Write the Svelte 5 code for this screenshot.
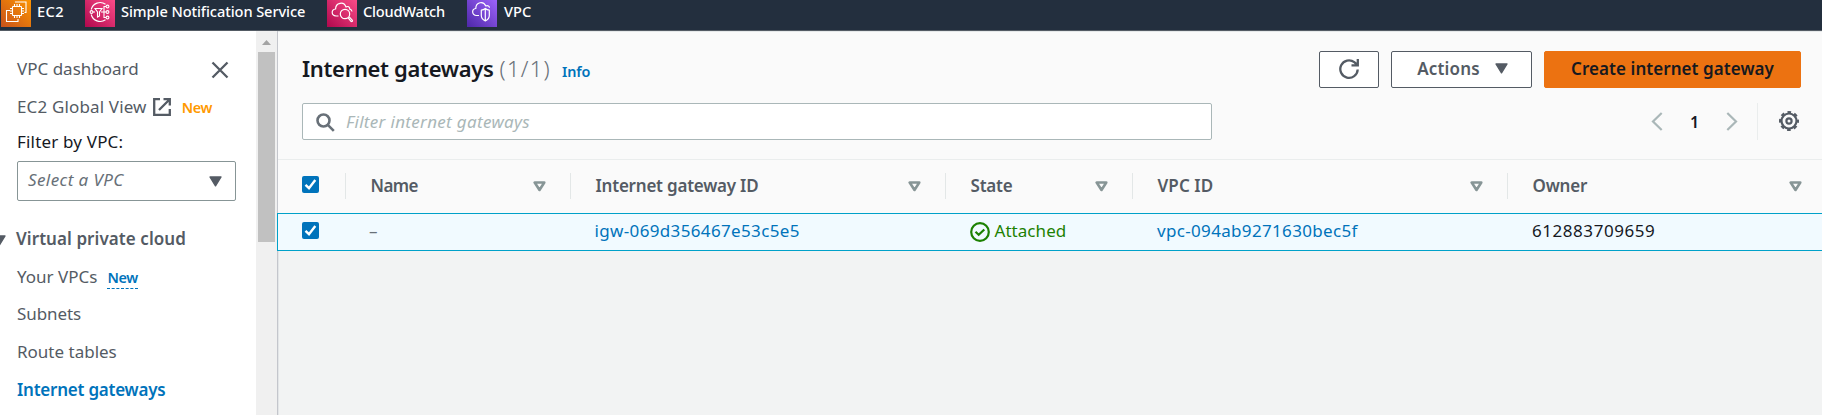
<script>
  const columns = [
    { label: 'Name', ls: -0.55 },
    { label: 'Internet gateway ID', ls: -0.22 },
    { label: 'State', ls: -0.2 },
    { label: 'VPC ID', ls: 0.1 },
    { label: 'Owner', ls: -0.2 },
  ];
</script>

{#snippet check()}
  <span class="check"><svg width="17" height="17" viewBox="0 0 17 17"><path d="M3.5 8.8 7 12.2 13.3 4" fill="none" stroke="#fff" stroke-width="2.4" /></svg></span>
{/snippet}

{#snippet caret()}
  <svg class="caret" width="13" height="11" viewBox="0 0 13 11"><path d="M1 1H12L6.5 9.8Z" fill="#545b64" stroke="#545b64" stroke-width="1.4" stroke-linejoin="round" /></svg>
{/snippet}

<div class="page">
  <header>
    <div class="service ec2">
      <svg width="30" height="30" viewBox="0 0 30 30">
        <defs><linearGradient id="o" x1="0" y1="1" x2="1" y2="0"><stop stop-color="#c8511b" /><stop offset="1" stop-color="#f90" /></linearGradient></defs>
        <rect width="30" height="30" fill="url(#o)" />
        <g fill="none" stroke="#fff" stroke-width="1.1">
          <rect x="11.5" y="9.5" width="9" height="9" rx=".6" />
          <path d="M13.5 7v2.5M16 7v2.5M18.5 7v2.5M13.5 18.5V21M16 18.5V21M18.5 18.5V21M9 11.5h2.5M9 14h2.5M9 16.5h2.5M20.5 11.5H23M20.5 14H23M20.5 16.5H23" />
          <path d="M14.5 5.5V5h10.500v10.500h-1.500M9 13.500H5.500v11H17v-2.500" />
        </g>
      </svg>
      <span>EC2</span>
    </div>
    <div class="service sns">
      <svg width="30" height="30" viewBox="0 0 30 30">
        <defs><linearGradient id="p" x1="0" y1="1" x2="1" y2="0"><stop stop-color="#b0084d" /><stop offset="1" stop-color="#ff4f8b" /></linearGradient></defs>
        <rect width="30" height="30" fill="url(#p)" />
        <g fill="none" stroke="#fff" stroke-width="1.1">
          <path d="M20.500 7.200A9.300 9.300 0 0 0 6.200 12.500M6.200 17.500A9.300 9.300 0 0 0 20.500 22.800" />
          <circle cx="6.500" cy="15" r="1.400" />
          <path d="M8 15h2M10 11.500h7l-2.500 3.500v4l-2 1v-5ZM16 15h5M21 9.500h-2v11h2" />
          <circle cx="22.500" cy="9.500" r="1.400" /><circle cx="22.500" cy="15" r="1.400" /><circle cx="22.500" cy="20.500" r="1.400" />
        </g>
      </svg>
      <span>Simple Notification Service</span>
    </div>
    <div class="service cw">
      <svg width="30" height="30" viewBox="0 0 30 30">
        <rect width="30" height="30" fill="url(#p)" />
        <g fill="none" stroke="#fff" stroke-width="1.2" stroke-linejoin="round">
          <path d="M11.500 19H9C4 18.500 4 12.500 8.600 12 8.500 5.500 17 4 19 10c2-1.200 3.800 0 3.800 2.200 1.200.2 2 1 2.200 2.300" />
          <circle cx="18" cy="17" r="4.700" />
          <path d="m21.200 20.800 2.800 3.500c1 .8 2-.3 1.200-1.200l-3-3.300" />
        </g>
      </svg>
      <span>CloudWatch</span>
    </div>
    <div class="service vpc">
      <svg width="30" height="30" viewBox="0 0 30 30">
        <defs><linearGradient id="v" x1="0" y1="1" x2="1" y2="0"><stop stop-color="#4d27a8" /><stop offset="1" stop-color="#a166ff" /></linearGradient></defs>
        <rect width="30" height="30" fill="url(#v)" />
        <g fill="none" stroke="#fff" stroke-width="1.200" stroke-linejoin="round">
          <path d="M12 18.500H9.500C4.500 18 4.500 12 8.800 11.500 8.800 5 16.500 3.500 18.800 9c2-1 3.700.2 3.700 1.800" />
          <path d="M18.300 11.500c1.300 1.200 2.600 1.600 4 1.700v5.300c0 2.600-1.600 4.300-4 5.400-2.400-1.100-4-2.800-4-5.400v-5.300c1.400-.1 2.700-.5 4-1.700ZM18.300 12v11.500" />
        </g>
      </svg>
      <span>VPC</span>
    </div>
  </header>

  <div class="body">
    <nav>
      <div class="row first">
        <span>VPC dashboard</span>
        <svg width="18" height="18" viewBox="0 0 18 18"><path d="M1.500 1.500 16.500 16.500M16.500 1.500 1.500 16.500" stroke="#545b64" stroke-width="2.300" fill="none" /></svg>
      </div>
      <div class="row global">
        <span>EC2 Global View</span>
        <svg width="18" height="18" viewBox="0 0 18 18"><path d="M7 1.200H1.200V16.800H16.800V11M10.500 1.200H16.800V7.500M16.500 1.500 6 12" stroke="#545b64" stroke-width="2.300" fill="none" /></svg>
        <span class="new">New</span>
      </div>
      <div class="row filter"><span>Filter by VPC:</span></div>
      <div class="select"><i>Select a VPC</i>{@render caret()}</div>
      <div class="row heading">{@render caret()}<b>Virtual private cloud</b></div>
      <div class="row item"><span>Your VPCs</span><span class="new link">New</span></div>
      <div class="row item"><span class="subnets">Subnets</span></div>
      <div class="row item"><span>Route tables</span></div>
      <div class="row item"><b class="active">Internet gateways</b></div>
    </nav>
    <div class="scroll">
      <svg width="9" height="5" viewBox="0 0 9 5"><path d="M0 5 4.500 0 9 5Z" fill="#a3a3a3" /></svg>
      <div class="thumb"></div>
    </div>

    <main>
      <section class="tools">
        <div class="titlebar">
          <h1>Internet gateways</h1><span class="count">(1/1)</span><a class="info">Info</a>
          <div class="buttons">
            <div class="btn refresh">
              <svg width="20" height="20" viewBox="0 0 20 20"><path d="M18.700 10.500A8.700 8.700 0 1 1 15.300 3.200L18.500 6.200M18.800 0V6.300H12.500" fill="none" stroke="#545b64" stroke-width="2.300" /></svg>
            </div>
            <div class="btn actions"><span>Actions</span>{@render caret()}</div>
            <div class="btn create">Create internet gateway</div>
          </div>
        </div>
        <div class="searchbar">
          <div class="search">
            <svg width="19" height="19" viewBox="0 0 19 19"><g fill="none" stroke="#687078" stroke-width="2.600"><circle cx="7.500" cy="7.500" r="6" /><path d="m11.800 11.800 6 6" /></g></svg>
            <i>Filter internet gateways</i>
          </div>
          <div class="pager">
            <svg width="12" height="19" viewBox="0 0 12 19"><path d="M10.700 1 2 9.500 10.700 18" fill="none" stroke="#aab7b8" stroke-width="2.200" /></svg>
            <b>1</b>
            <svg width="12" height="19" viewBox="0 0 12 19"><path d="M1.300 1 10 9.500 1.300 18" fill="none" stroke="#aab7b8" stroke-width="2.200" /></svg>
            <div class="gear">
              <svg width="20" height="20" viewBox="-10 -10 20 20" fill="none" stroke="#545b64">
                <circle r="7.500" stroke-width="2.200" />
                <circle r="9" stroke-width="2" stroke-dasharray="3.700 3.369" stroke-dashoffset="1.850" />
                <circle r="2.600" stroke-width="2.200" />
              </svg>
            </div>
          </div>
        </div>
      </section>
      <section class="grid head">
        <div class="cell pick">{@render check()}</div>
        {#each columns as c}
          <div class="cell">
            <b style:letter-spacing="{c.ls}px">{c.label}</b>
            <svg width="13" height="11" viewBox="0 0 13 11"><path d="M1.700 1.500H11.300L6.500 9Z" fill="none" stroke="#879596" stroke-width="2.600" stroke-linejoin="round" /></svg>
          </div>
        {/each}
      </section>
      <section class="grid data">
        <div class="cell pick">{@render check()}</div>
        <div class="cell dash">–</div>
        <div class="cell"><a class="igw">igw-069d356467e53c5e5</a></div>
        <div class="cell state">
          <svg width="20" height="20" viewBox="0 0 20 20" fill="none" stroke="#1d8102" stroke-width="2.200"><circle cx="10" cy="10" r="8.800" /><path d="m5.500 9.800 3.200 3 5.600-5.300" /></svg>
          <span>Attached</span>
        </div>
        <div class="cell"><a class="vpcid">vpc-094ab9271630bec5f</a></div>
        <div class="cell owner">612883709659</div>
      </section>
    </main>
  </div>
</div>

<style>
  .page { width: 1822px; height: 415px; overflow: hidden; display: flex; flex-direction: column; font: 17px/20px "Noto Sans", sans-serif; color: #16191f; background: #f2f3f3; white-space: nowrap; }
  .page * { box-sizing: border-box; }
  svg { display: block; flex: none; }
  b { font-weight: 600; }
  header { height: 31px; flex: none; background: #232f3e; border-bottom: 1px solid #545b64; display: flex; align-items: flex-start; padding-left: 1px; }
  .service { display: flex; align-items: center; height: 30px; margin-top: -3px; color: #fff; font-size: 14.600px; font-weight: 500; }
  .service span { padding: 0 0 2px 6px; }
  .ec2 { width: 84px; }
  .ec2 span { letter-spacing: .4px; }
  .sns { width: 242px; }
  .sns span { letter-spacing: -.08px; }
  .cw { width: 140px; }
  .cw span { letter-spacing: -.2px; }
  .vpc span { padding-left: 7px; letter-spacing: 0; }

  .body { flex: 1; display: flex; min-height: 0; }
  nav { width: 256px; flex: none; background: #fff; padding: 19px 20px 0 17px; color: #545b64; }
  .row { display: flex; align-items: center; height: 37.600px; }
  .first { justify-content: space-between; height: 38px; padding-right: 7px; }
  .first svg { margin-top: 1px; }
  .global { height: 37px; letter-spacing: .15px; }
  .global svg { margin: 1px 11px 0 6px; }
  .new { font-size: 14.400px; font-weight: 600; color: #ff9900; letter-spacing: -.3px; margin-top: 2px; }
  .filter { height: 32px; padding-top: 2px; color: #16191f; letter-spacing: .18px; }
  .select { height: 40px; width: 219px; margin-top: 4px; border: 1px solid #879596; border-radius: 2px; display: flex; align-items: center; justify-content: space-between; padding: 0 13px 2px 10px; color: #687078; }
  .select i { letter-spacing: .4px; }
  .select .caret { margin-top: 2px; }
  .heading { margin: 19px 0 0 -17px; height: 38px; }
  .heading .caret { margin: 2px 10px 0 -7px; }
  .heading b { letter-spacing: .07px; }
  .item .link { color: #0073bb; margin: 3px 0 0 10px; border-bottom: 1px dashed #0073bb; line-height: 21px; }
  .subnets { letter-spacing: -.1px; }
  .active { color: #0073bb; letter-spacing: -.23px; }

  .scroll { width: 21px; flex: none; background: #f0f0f0; display: flex; flex-direction: column; align-items: center; padding-top: 9px; }
  .thumb { width: 17px; height: 190px; background: #c1c1c1; margin-top: 7px; }

  main { flex: 1; border-left: 1px solid #c4c6cc; box-shadow: inset 1px 0 #e3e6e8; }
  .tools { height: 129px; background: #fafafa; border-top: 1px solid #e6e9ea; border-bottom: 1px solid #eaeded; padding: 19px 21px 0 24px; }
  .titlebar { display: flex; height: 37px; align-items: center; }
  h1 { margin: -3px 0 0; font-size: 22px; line-height: 30px; font-weight: 600; letter-spacing: -.33px; }
  .count { font-size: 22px; color: #687078; font-weight: 300; margin: -3px 0 0 6px; letter-spacing: 1.300px; }
  .info { font-size: 14.400px; font-weight: 600; color: #0073bb; margin: 4px 0 0 11px; letter-spacing: -.1px; }
  .buttons { margin-left: auto; display: flex; gap: 12px; }
  .btn { height: 37px; border: 1px solid #545b64; border-radius: 2px; background: #fff; color: #545b64; font-weight: 600; display: flex; align-items: center; justify-content: center; }
  .refresh { width: 60px; padding-bottom: 1px; }
  .actions { width: 141px; gap: 15px; padding: 0 0 2px 2px; letter-spacing: .15px; }
  .create { width: 257px; background: #ec7211; border-color: #ec7211; color: #16191f; padding-bottom: 2px; letter-spacing: .06px; }
  .searchbar { display: flex; justify-content: space-between; align-items: center; margin-top: 15px; height: 37px; }
  .search { width: 910px; height: 37px; background: #fff; border: 1px solid #aab7b8; border-radius: 2px; display: flex; align-items: center; padding-left: 13px; color: #aab7b8; }
  .search svg { margin-top: 2px; }
  .search i { letter-spacing: .32px; margin: 0 0 0 11px; }
  .pager { display: flex; align-items: center; height: 37px; }
  .pager b { width: 63px; text-align: center; font-size: 16px; }
  .gear { margin-left: 19px; border-left: 1px solid #eaeded; height: 37px; padding: 8px 2px 0 21px; }

  .grid { display: grid; grid-template-columns: 68px 225px 375px 187px 375px 1fr; }
  .cell { display: flex; align-items: center; padding-left: 24.500px; }
  .head { height: 53px; background: #fafafa; }
  .head .cell { height: 26px; margin-top: 13px; border-right: 1px solid #e3e7e7; padding-right: 24px; justify-content: space-between; color: #545b64; }
  .head .cell:last-child { border: 0; padding-right: 20px; }
  .grid .pick { padding: 0 0 0 24px; justify-content: flex-start; }
  .check { width: 17px; height: 17px; background: #0073bb; border-radius: 2px; margin-top: -3px; }
  .data { height: 38px; margin-left: -1px; border: 1px solid #00a1c9; border-right: 0; background: #f1faff; }
  .data .cell { padding: 0 0 2px 24px; }
  .data .pick { padding-bottom: 1px; }
  a { color: #0073bb; }
  .igw { letter-spacing: .35px; margin-left: -.5px; }
  .vpcid { letter-spacing: .33px; }
  .data .dash { color: #687078; padding-left: 23px; }
  .data .state { color: #1d8102; gap: 5px; padding-left: 23.500px; letter-spacing: .05px; }
  .state svg { margin-top: 2px; }
  .owner { letter-spacing: .55px; }
</style>
